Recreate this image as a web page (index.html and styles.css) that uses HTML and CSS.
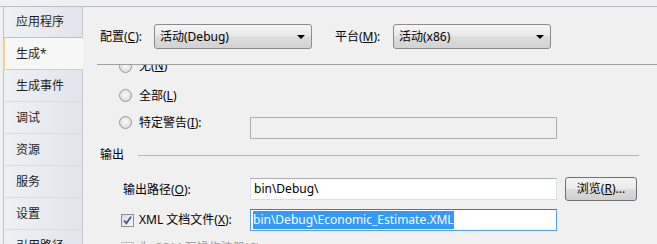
FILE: index.html
```html
<!doctype html>
<html lang="zh-CN">
<head>
  <meta charset="UTF-8">
  <title>项目属性 - 生成</title>
  <link rel="stylesheet" href="styles.css">
</head>
<body>
  <div class="window">
    <nav class="tabs">
      <div class="tab first">应用程序</div>
      <div class="tab active">生成*</div>
      <div class="tab">生成事件</div>
      <div class="tab">调试</div>
      <div class="tab">资源</div>
      <div class="tab">服务</div>
      <div class="tab">设置</div>
      <div class="tab">引用路径</div>
    </nav>

    <main class="page">
      <div class="config-bar">
        <span class="config-label">配置(<u>C</u>):</span>
        <div class="combo">活动(Debug)<span class="arrow"></span></div>
        <span class="config-label platform">平台(<u>M</u>):</span>
        <div class="combo">活动(x86)<span class="arrow"></span></div>
      </div>

      <div class="scroll">
        <div class="scroll-inner">
          <div class="option-row top">
            <span class="radio"></span>
            <span class="option-text">无(<u>N</u>)</span>
          </div>
          <div class="option-row">
            <span class="radio"></span>
            <span class="option-text">全部(<u>L</u>)</span>
          </div>
          <div class="option-row">
            <span class="radio"></span>
            <span class="option-text warn-label">特定警告(<u>I</u>):</span>
            <div class="textbox disabled low"></div>
          </div>

          <div class="group-head">
            <span class="group-title">输出</span>
            <span class="group-line"></span>
          </div>

          <div class="field-row path-row">
            <span class="field-label">输出路径(<u>O</u>):</span>
            <div class="textbox">bin\Debug\</div>
            <div class="button">浏览(<u>R</u>)...</div>
          </div>

          <div class="field-row xml-row">
            <span class="checkbox">
              <svg width="11" height="11" viewBox="0 0 11 11"><path d="M2 5.5 L4.4 8.2 L9 1.8" fill="none" stroke="#3c5a96" stroke-width="1.8"/></svg>
            </span>
            <span class="check-label">XML 文档文件(<u>X</u>):</span>
            <div class="textbox focused"><span class="selected">bin\Debug\Economic_Estimate.XML</span></div>
          </div>

          <div class="field-row com-row">
            <span class="checkbox disabled"></span>
            <span class="check-label muted">为 COM 互操作注册(<u>C</u>)</span>
          </div>
        </div>
      </div>
    </main>
  </div>
</body>
</html>
```

FILE: styles.css
```css
*{
  box-sizing: border-box;
}

html, body{
  height: 100%;
}

body{
  margin: 0;
  overflow: hidden;
  color: #000;
  font-family: "Noto Sans", "Noto Sans CJK SC", sans-serif;
  font-size: 12px;
  line-height: 16px;
  background: #f0f0f0;
}

u{
  text-underline-offset: 1px;
}

.window{
  display: flex;
  height: 100%;
  margin-top: 6px;
  border-top: 1px solid #b3bdcb;
}

/* left tab strip */

.tabs{
  width: 80px;
  margin-left: 3px;
  flex: none;
}

.tab{
  display: flex;
  height: 32px;
  padding-left: 12px;
  color: #1e1e1e;
  background: linear-gradient(to right, #eef0f4, #e1e5eb);
  border-left: 1px solid #b9c1cc;
  border-right: 1px solid #c3cad4;
  border-bottom: 1px solid #d7dce3;
  align-items: center;
}

.tab.first{
  height: 31px;
  border-bottom-color: #b9c1cc;
}

.tab.active{
  background: #f7f7f7;
  border-left: 2px solid #f3cf8a;
  border-right: none;
  border-bottom: 1px solid #c9ced6;
  padding-left: 11px;
}

/* page */

.page{
  flex: 1;
  padding-left: 14px;
  min-width: 0;
}

.config-bar{
  display: flex;
  height: 58px;
  padding: 17px 0 0 3px;
  border-bottom: 1px solid #a0a0a0;
  align-items: flex-start;
}

.config-label{
  width: 54px;
  height: 25px;
  line-height: 25px;
}

.config-label.platform{
  width: 58px;
  margin-left: 23px;
}

.combo{
  position: relative;
  width: 158px;
  height: 25px;
  padding-left: 5px;
  line-height: 23px;
  background: linear-gradient(#f6f6f6, #e9e9e9 45%, #dcdcdc 55%, #d2d2d2);
  border: 1px solid #8b8b8b;
  border-radius: 3px;
}

.arrow{
  position: absolute;
  top: 10px;
  right: 6px;
  border-left: 4px solid transparent;
  border-right: 4px solid transparent;
  border-top: 4px solid #000;
}

.scroll{
  height: 180px;
  overflow: hidden;
}

.scroll-inner{
  margin-top: -11px;
}

.option-row{
  display: flex;
  height: 27px;
  padding-left: 22px;
  align-items: center;
}

.option-row.top{
  height: 24px;
  margin-bottom: 4px;
}

.radio{
  width: 13px;
  height: 13px;
  flex: none;
  background: radial-gradient(circle at 50% 45%, #fbfbfb 0, #e4e4e4 55%, #cfcfcf 100%);
  border: 1px solid #979797;
  border-radius: 50%;
}

.option-text{
  margin-left: 7px;
}

.warn-label{
  width: 111px;
}

.textbox{
  width: 307px;
  height: 22px;
  padding-left: 3px;
  line-height: 20px;
  white-space: nowrap;
  background: #fff;
  border: 1px solid #dbdfe6;
  border-top-color: #abadb3;
}

.textbox.disabled{
  background: #f0f0f0;
  border: 1px solid #adadad;
}

.textbox.low{
  margin-top: 10px;
}

.textbox.focused{
  padding-left: 2px;
  border-color: #569de5;
  border-top-color: #3d7bad;
}

.selected{
  display: inline-block;
  color: #fff;
  line-height: 18px;
  background: #3399ff;
}

.group-head{
  display: flex;
  height: 20px;
  margin-top: 9px;
  padding-left: 3px;
  align-items: center;
}

.group-line{
  flex: 1;
  height: 1px;
  margin: 0 18px 0 14px;
  background: #b4b4b4;
}

.field-row{
  display: flex;
  align-items: center;
}

.path-row{
  height: 24px;
  margin-top: 12px;
}

.xml-row{
  height: 22px;
  margin-top: 8px;
}

.com-row{
  height: 24px;
  margin-top: 5px;
}

.field-label{
  width: 153px;
  padding-left: 26px;
  padding-top: 2px;
}

.button{
  width: 72px;
  height: 24px;
  margin-left: 8px;
  line-height: 22px;
  text-align: center;
  background: linear-gradient(#f2f2f2, #ebebeb 50%, #dddddd 50%, #cfcfcf);
  border: 1px solid #707070;
  border-radius: 3px;
}

.checkbox{
  display: flex;
  width: 13px;
  height: 13px;
  margin-left: 24px;
  flex: none;
  background: linear-gradient(135deg, #dcdcdc, #f7f7f7);
  border: 1px solid #8e8f8f;
  align-items: center;
  justify-content: center;
}

.checkbox.disabled{
  background: #f4f4f4;
  border-color: #c2c2c2;
}

.check-label{
  width: 111px;
  margin-left: 5px;
  white-space: nowrap;
}

.check-label.muted{
  width: auto;
  color: #a0a0a0;
}
```
